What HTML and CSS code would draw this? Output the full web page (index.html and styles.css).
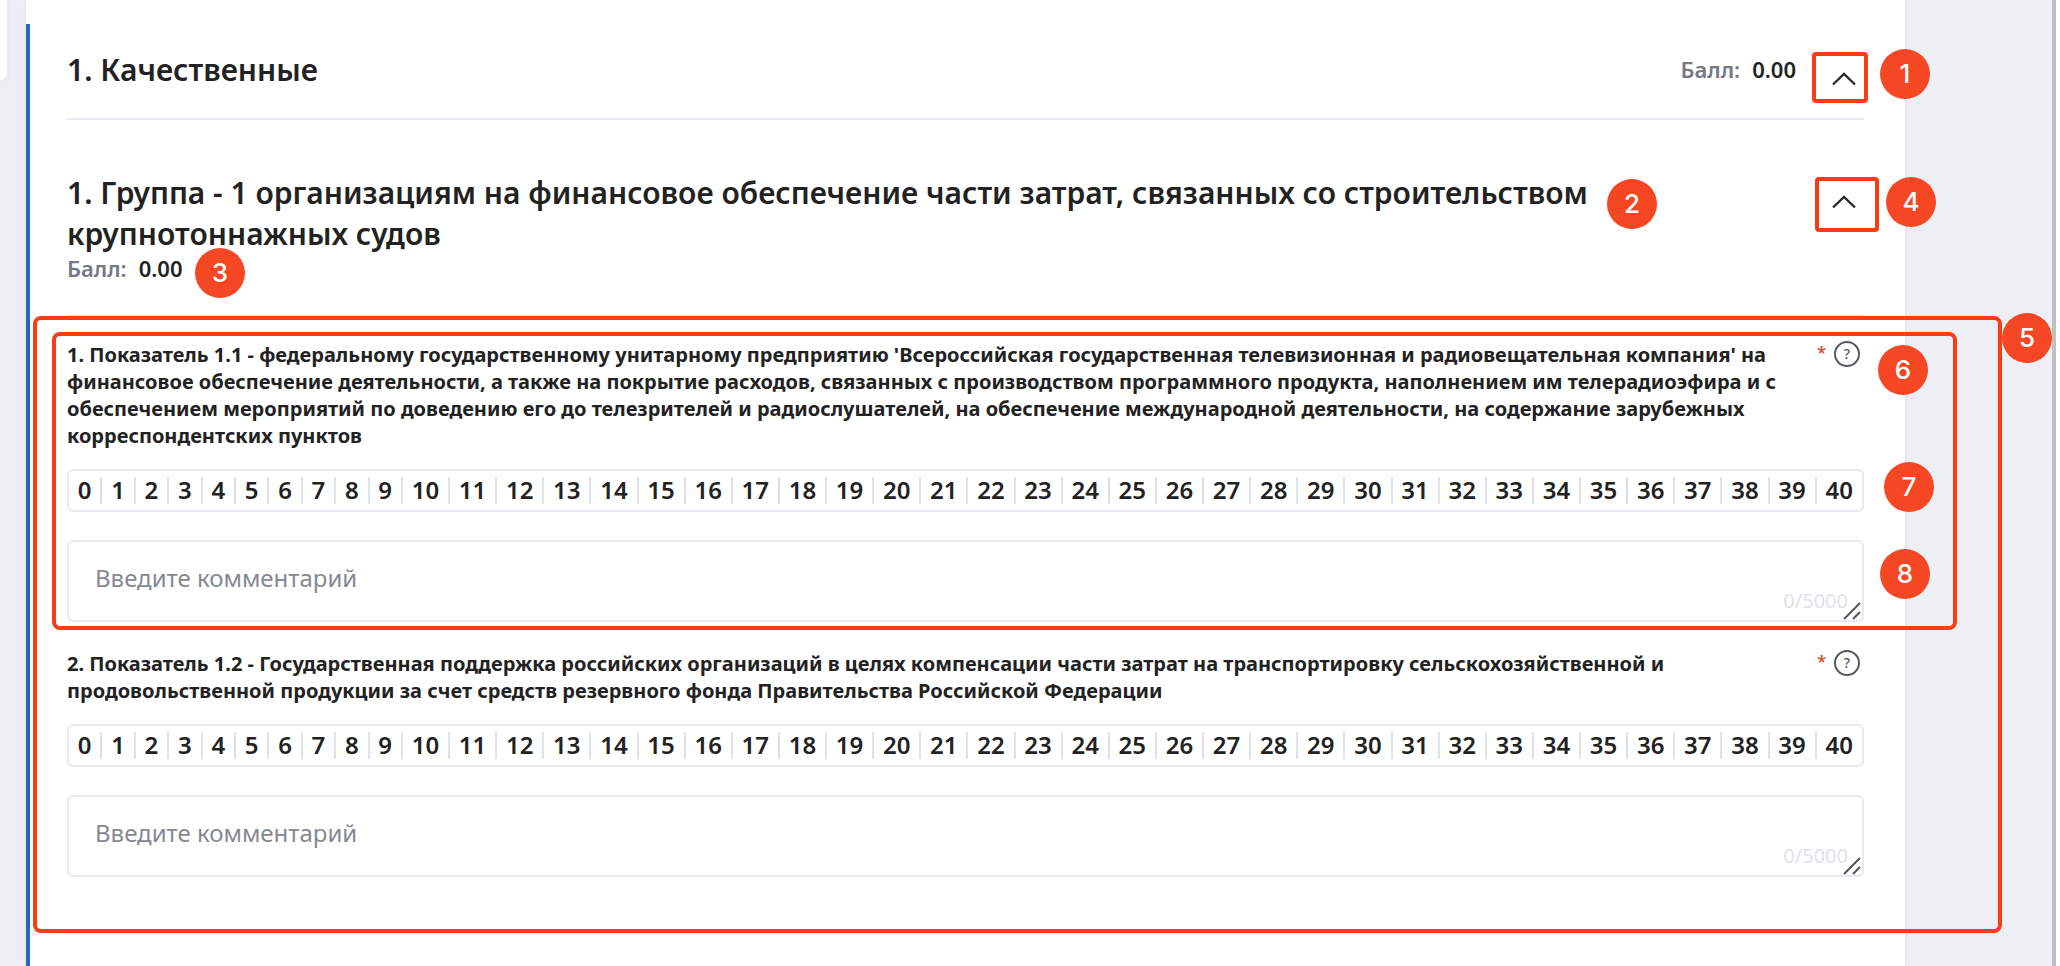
FILE: index.html
```html
<!DOCTYPE html>
<html lang="ru">
<head>
<meta charset="utf-8">
<title>Оценка показателей</title>
<link rel="stylesheet" href="styles.css">
</head>
<body>
<div class="page">
  <aside class="side"><div class="side-card"></div></aside>
  <main class="card">
    <section class="criteria">
      <header class="head head-ruled">
        <h1 class="title">1. Качественные</h1>
        <p class="score"><span class="score-label">Балл:</span><span>0.00</span></p>
        <button class="toggle" type="button" aria-label="Свернуть раздел">
          <svg class="chevron" viewBox="0 0 24 14" aria-hidden="true"><path d="M1 12.5 12 2l11 10.5"/></svg>
        </button>
        <span class="frame frame-section"></span>
        <span class="badge badge-1">1</span>
      </header>

      <div class="group-head">
        <header class="head">
          <h2 class="title">1. Группа - 1 организациям на финансовое обеспечение части затрат, связанных со строительством крупнотоннажных судов</h2>
          <button class="toggle" type="button" aria-label="Свернуть группу">
            <svg class="chevron" viewBox="0 0 24 14" aria-hidden="true"><path d="M1 12.5 12 2l11 10.5"/></svg>
          </button>
          <span class="frame frame-group"></span>
          <span class="badge badge-2">2</span>
          <span class="badge badge-4">4</span>
        </header>
        <p class="score"><span class="score-label">Балл:</span><span>0.00</span></p>
        <span class="badge badge-3">3</span>
      </div>

      <div class="indicators">
        <article class="indicator">
          <div class="indicator-head">
            <h3 class="indicator-title" id="t1">1. Показатель 1.1 - федеральному государственному унитарному предприятию 'Всероссийская государственная телевизионная и радиовещательная компания' на финансовое обеспечение деятельности, а также на покрытие расходов, связанных с производством программного продукта, наполнением им телерадиоэфира и с обеспечением мероприятий по доведению его до телезрителей и радиослушателей, на обеспечение международной деятельности, на содержание зарубежных корреспондентских пунктов</h3>
            <span class="required">*</span>
            <button class="help" type="button" aria-label="Подсказка">?</button>
          </div>
          <div class="scale" role="radiogroup" aria-labelledby="t1" data-name="score1"></div>
          <div class="comment">
            <textarea class="comment-input" rows="1" placeholder="Введите комментарий" aria-label="Комментарий к показателю 1.1"></textarea>
            <span class="counter">0/5000</span>
            <svg class="grip" viewBox="0 0 18 18" aria-hidden="true"><path d="M1 17 17 1M10 17l7-7"/></svg>
          </div>
          <span class="frame frame-indicator"></span>
          <span class="badge badge-6">6</span>
          <span class="badge badge-7">7</span>
          <span class="badge badge-8">8</span>
        </article>

        <article class="indicator">
          <div class="indicator-head">
            <h3 class="indicator-title" id="t2">2. Показатель 1.2 - Государственная поддержка российских организаций в целях компенсации части затрат на транспортировку сельскохозяйственной и продовольственной продукции за счет средств резервного фонда Правительства Российской Федерации</h3>
            <span class="required">*</span>
            <button class="help" type="button" aria-label="Подсказка">?</button>
          </div>
          <div class="scale" role="radiogroup" aria-labelledby="t2" data-name="score2"></div>
          <div class="comment">
            <textarea class="comment-input" rows="1" placeholder="Введите комментарий" aria-label="Комментарий к показателю 1.2"></textarea>
            <span class="counter">0/5000</span>
            <svg class="grip" viewBox="0 0 18 18" aria-hidden="true"><path d="M1 17 17 1M10 17l7-7"/></svg>
          </div>
        </article>
        <span class="frame frame-list"></span>
        <span class="badge badge-5">5</span>
      </div>
    </section>
  </main>
</div>
<script src="scale.js"></script>
</body>
</html>
```
FILE: styles.css
```css
* { box-sizing: border-box; }

body {
  margin: 0;
  background: #fff;
  color: #222;
  font-family: "Noto Sans", "Open Sans", sans-serif;
}

h1, h2, h3, p { margin: 0; }

button {
  padding: 0;
  border: 0;
  background: none;
  color: inherit;
  font-family: inherit;
  cursor: pointer;
}

.page {
  display: grid;
  grid-template-columns: 26px 1fr 147px;
  min-height: 100vh;
  margin-right: 4px;
  border-right: 4px solid #bfbfbf;
  background: #edeff4;
}

.side-card {
  width: 7px;
  height: 80px;
  border-radius: 0 0 8px 0;
  background: #fff;
  box-shadow: 0 1px 4px #dde1e8;
}

.card {
  display: flex;
  padding-top: 24px;
  background: #fff;
  box-shadow: 0 0 3px #d5dae2;
}

.criteria {
  flex: 1;
  padding: 0 41px 0 37px;
  border-left: 4px solid #2468bd;
}

.head {
  position: relative;
  display: flex;
  align-items: flex-start;
}

.head-ruled {
  padding: 25px 0 23px;
  border-bottom: 2px solid #e6e9ef;
}

.title {
  flex: 1;
  font-size: 30px;
  font-weight: 600;
  line-height: 41px;
}

.score {
  display: flex;
  gap: 12px;
  font-size: 22px;
  font-weight: 600;
  line-height: 28px;
}

.head .score { margin: 6px 28px 0 0; }

.score-label { color: #757984; }

.toggle {
  display: grid;
  place-items: center;
  width: 40px;
  height: 32px;
  margin-top: 14px;
}

.chevron {
  width: 24px;
  height: 14px;
  fill: none;
  stroke: #2a2b2e;
  stroke-width: 2.4;
}

.group-head {
  position: relative;
  padding: 52px 0 33px;
  border-bottom: 2px solid #e6e9ef;
}

.indicators {
  position: relative;
  display: grid;
  gap: 28px;
  padding: 24px 0 56px;
}

.indicator { position: relative; }

.indicator-head {
  display: flex;
  align-items: flex-start;
  margin-bottom: 20px;
}

.indicator-title {
  flex: 1;
  margin-right: 38px;
  font-size: 20px;
  font-weight: 700;
  line-height: 27px;
}

.required {
  margin-right: 8px;
  color: #cc5b3c;
  font-size: 16px;
  font-weight: 700;
  line-height: 22px;
}

.help {
  width: 26px;
  height: 26px;
  margin-right: 4px;
  border: 2px solid #555961;
  border-radius: 50%;
  color: #555961;
  font-size: 14px;
  font-weight: 500;
  line-height: 22px;
}

.scale {
  display: flex;
  margin-bottom: 28px;
  padding: 6px 0;
  border: 2px solid #e8eaef;
  border-radius: 6px;
}

.mark {
  flex: 1 1 auto;
  height: 27px;
  border-left: 2px solid #dfe2e9;
  font-size: 24px;
  font-weight: 600;
  line-height: 25px;
  text-align: center;
  cursor: pointer;
}

.mark:first-child { border-left: 0; }

.mark-input {
  position: absolute;
  opacity: 0;
  pointer-events: none;
}

.comment {
  position: relative;
  display: flex;
}

.comment-input {
  flex: 1;
  height: 82px;
  padding: 19px 26px;
  border: 2px solid #e8eaef;
  border-radius: 6px;
  outline: 0;
  background: #fff;
  color: #222;
  font-family: inherit;
  font-size: 24px;
  line-height: 34px;
  resize: none;
}

.comment-input::placeholder { color: #868992; opacity: 1; }

.counter {
  position: absolute;
  right: 16px;
  bottom: 8px;
  color: #e1e3e9;
  font-size: 20px;
  line-height: 27px;
}

.grip {
  position: absolute;
  right: 3px;
  bottom: 2px;
  width: 18px;
  height: 18px;
  fill: none;
  stroke: #555;
  stroke-width: 2;
}

/* Callout frames and numbered badges laid over the form */
.frame {
  position: absolute;
  border: 4px solid #fa3c14;
  border-radius: 4px;
  pointer-events: none;
}

.frame-section { top: 28px; right: -4px; width: 56px; height: 51px; }
.frame-group { top: 5px; right: -15px; width: 64px; height: 55px; }
.frame-indicator { inset: -9px -93px -8px -15px; border-radius: 8px; }
.frame-list { inset: -1px -138px 0 -34px; border-radius: 8px; }

.badge {
  position: absolute;
  width: 50px;
  height: 50px;
  border-radius: 50%;
  background: #f54723;
  color: #fff;
  font-family: Inter, sans-serif;
  font-size: 26px;
  font-weight: 500;
  line-height: 50px;
  text-align: center;
}

.badge-1 { top: 25px; right: -66px; }
.badge-2 { top: 7px; right: 207px; }
.badge-3 { top: 128px; left: 128px; }
.badge-4 { top: 5px; right: -72px; }
.badge-5 { top: -4px; right: -188px; }
.badge-6 { top: 4px; right: -64px; }
.badge-7 { top: 121px; right: -70px; }
.badge-8 { top: 208px; right: -66px; }
```
FILE: scale.js
```
const MAX_SCORE = 40;

document.querySelectorAll(".scale").forEach((scale) => {
  for (let value = 0; value <= MAX_SCORE; value += 1) {
    const label = document.createElement("label");
    label.className = "mark";
    const input = document.createElement("input");
    input.type = "radio";
    input.className = "mark-input";
    input.name = scale.dataset.name;
    input.value = value;
    label.append(input, String(value));
    scale.append(label);
  }
});
```
